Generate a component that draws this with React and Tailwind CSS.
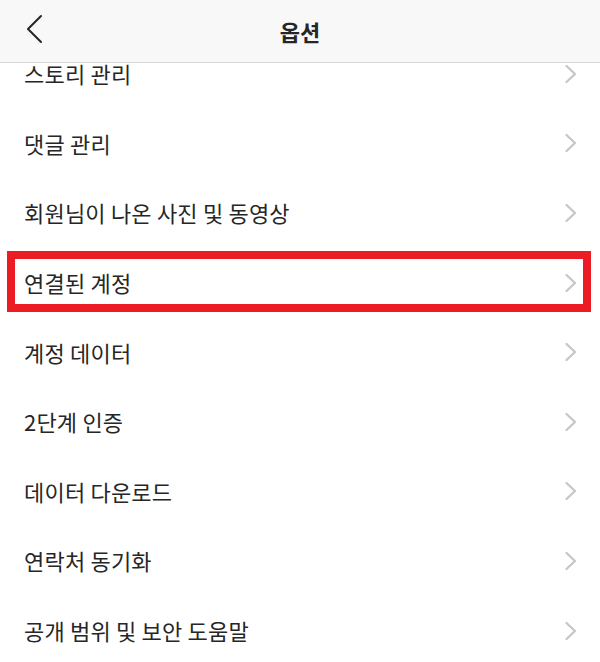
const items = [
  '스토리 관리',
  '댓글 관리',
  '회원님이 나온 사진 및 동영상',
  '연결된 계정',
  '계정 데이터',
  '2단계 인증',
  '데이터 다운로드',
  '연락처 동기화',
  '공개 범위 및 보안 도움말',
]

function Chevron() {
  return (
    <svg width="14" height="20" viewBox="0 0 14 20" fill="none">
      <polyline points="2.5,2 11,10 2.5,18" stroke="#c7c7c7" strokeWidth="2.4" strokeLinecap="round" strokeLinejoin="round" />
    </svg>
  )
}

export default function App() {
  return (
    <div className="flex h-[662px] w-[600px] flex-col overflow-hidden bg-white font-['Noto_Sans_CJK_KR','Noto_Sans',sans-serif] text-[#262626]">
      <header className="relative z-10 flex h-[63px] shrink-0 items-center justify-center border-b border-[#d8d8d8] bg-[#f8f8f8]">
        <button type="button" className="absolute left-[26px] top-[14px]">
          <svg width="18" height="30" viewBox="0 0 18 30" fill="none">
            <polyline points="15,2 2,15 15,28" stroke="#262626" strokeWidth="2" strokeLinecap="round" strokeLinejoin="round" />
          </svg>
        </button>
        <h1 className="text-[22px] font-bold">옵션</h1>
      </header>
      <ul className="-mt-[24px] flex-1">
        {items.map((label, i) => (
          <li key={label} className="relative flex h-[69.6px] items-center justify-between pl-6 pr-[22px] text-[22px] tracking-[0.2px]">
            <span>{label}</span>
            <Chevron />
            {i === 3 && (
              <div className="pointer-events-none absolute bottom-[5px] left-[7px] right-[9px] top-[3px] border-8 border-[#ec1c24]" />
            )}
          </li>
        ))}
      </ul>
    </div>
  )
}
